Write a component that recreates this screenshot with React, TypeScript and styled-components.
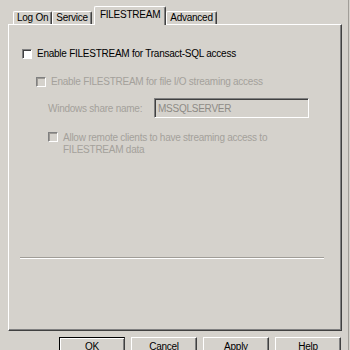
import React from "react";
import styled, { createGlobalStyle } from "styled-components";

const GlobalStyle = createGlobalStyle`
  html, body {
    margin: 0;
    padding: 0;
    background: #d5d2cc;
  }
  body {
    font-family: "Liberation Sans", Arial, sans-serif;
    font-size: 10px;
    letter-spacing: -0.25px;
    color: #000;
  }
`;

const Dialog = styled.div`
  width: 348px;
  height: 350px;
  overflow: hidden;
  background: #d5d2cc;
  border-right: 1px solid #a19e98;
`;

const TabStrip = styled.div`
  display: flex;
  align-items: flex-end;
  height: 24px;
  padding-left: 13px;
  box-sizing: border-box;
`;

const Tab = styled.div<{ $active?: boolean }>`
  position: relative;
  z-index: ${(p) => (p.$active ? 2 : 1)};
  height: ${(p) => (p.$active ? 19 : 13)}px;
  margin: 0 ${(p) => (p.$active ? 0 : 0)}px ${(p) => (p.$active ? -1 : 0)}px
    ${(p) => (p.$active ? 2 : 0)}px;
  padding: ${(p) => (p.$active ? "2px 5px 0" : "0 3px")};
  box-sizing: border-box;
  background: #d5d2cc;
  border-top: 1px solid #fff;
  border-left: 1px solid #fff;
  border-right: 1px solid #404040;
  border-top-left-radius: 2px;
  border-top-right-radius: 2px;
  box-shadow: inset -1px 0 #808080;
  line-height: 12px;
  white-space: nowrap;
`;

const Panel = styled.div`
  position: relative;
  margin-left: 8px;
  width: 334px;
  height: 307px;
  box-sizing: border-box;
  display: flex;
  flex-direction: column;
  padding-top: 22px;
  border-top: 1px solid #fff;
  border-left: 1px solid #fff;
  border-right: 1px solid #404040;
  border-bottom: 1px solid #404040;
  box-shadow: inset -1px -1px #808080;
`;

const Row = styled.div<{ $indent: number; $top: number; $align?: string }>`
  display: flex;
  align-items: ${(p) => p.$align ?? "center"};
  margin-left: ${(p) => p.$indent}px;
  margin-top: ${(p) => p.$top}px;
  min-height: 13px;
`;

const Box = styled.span<{ $disabled?: boolean }>`
  flex: none;
  width: 10px;
  height: 10px;
  box-sizing: border-box;
  background: ${(p) => (p.$disabled ? "#d5d2cc" : "#fff")};
  border-top: 1px solid #808080;
  border-left: 1px solid #808080;
  border-right: 1px solid #fff;
  border-bottom: 1px solid #fff;
  box-shadow: inset 1px 1px ${(p) => (p.$disabled ? "#9c9994" : "#404040")};
`;

const Label = styled.span<{ $disabled?: boolean }>`
  margin-left: 5px;
  line-height: 12px;
  color: ${(p) => (p.$disabled ? "#a4a19b" : "#000")};
`;

const FieldLabel = styled.span`
  width: 106px;
  flex: none;
  color: #a4a19b;
`;

const TextField = styled.div`
  width: 155px;
  height: 20px;
  box-sizing: border-box;
  padding: 3px 0 0 3px;
  border-top: 1px solid #808080;
  border-left: 1px solid #808080;
  border-right: 1px solid #fff;
  border-bottom: 1px solid #fff;
  box-shadow: inset 1px 1px #404040;
  color: #8e8b86;
  line-height: 13px;
`;

const Separator = styled.div`
  margin: auto 0 71px 11px;
  width: 304px;
  border-top: 1px solid #a09d97;
  border-bottom: 1px solid #fff;
`;

const ButtonBar = styled.div`
  display: flex;
  justify-content: flex-end;
  gap: 6px;
  margin-top: 6px;
  padding-right: 7px;
`;

const Button = styled.div<{ $default?: boolean }>`
  width: 66px;
  height: 23px;
  box-sizing: border-box;
  display: flex;
  justify-content: center;
  padding-top: 3px;
  border-top: 1px solid ${(p) => (p.$default ? "#000" : "#fff")};
  border-left: 1px solid ${(p) => (p.$default ? "#000" : "#fff")};
  border-right: 1px solid #404040;
  border-bottom: 1px solid #404040;
  box-shadow: ${(p) =>
    p.$default ? "inset 1px 1px #fff, inset -1px -1px #808080" : "inset -1px -1px #808080"};
  line-height: 12px;
`;

export default function App() {
  return (
    <Dialog>
      <GlobalStyle />
      <TabStrip>
        <Tab>Log On</Tab>
        <Tab>Service</Tab>
        <Tab $active>FILESTREAM</Tab>
        <Tab>Advanced</Tab>
      </TabStrip>
      <Panel>
        <Row $indent={13} $top={0}>
          <Box />
          <Label>Enable FILESTREAM for Transact-SQL access</Label>
        </Row>
        <Row $indent={27} $top={15}>
          <Box $disabled />
          <Label $disabled>Enable FILESTREAM for file I/O streaming access</Label>
        </Row>
        <Row $indent={39} $top={10}>
          <FieldLabel>Windows share name:</FieldLabel>
          <TextField>MSSQLSERVER</TextField>
        </Row>
        <Row $indent={39} $top={14} $align="flex-start">
          <Box $disabled />
          <Label $disabled>
            Allow remote clients to have streaming access to
            <br />
            FILESTREAM data
          </Label>
        </Row>
        <Separator />
      </Panel>
      <ButtonBar>
        <Button $default>OK</Button>
        <Button>Cancel</Button>
        <Button>Apply</Button>
        <Button>Help</Button>
      </ButtonBar>
    </Dialog>
  );
}
